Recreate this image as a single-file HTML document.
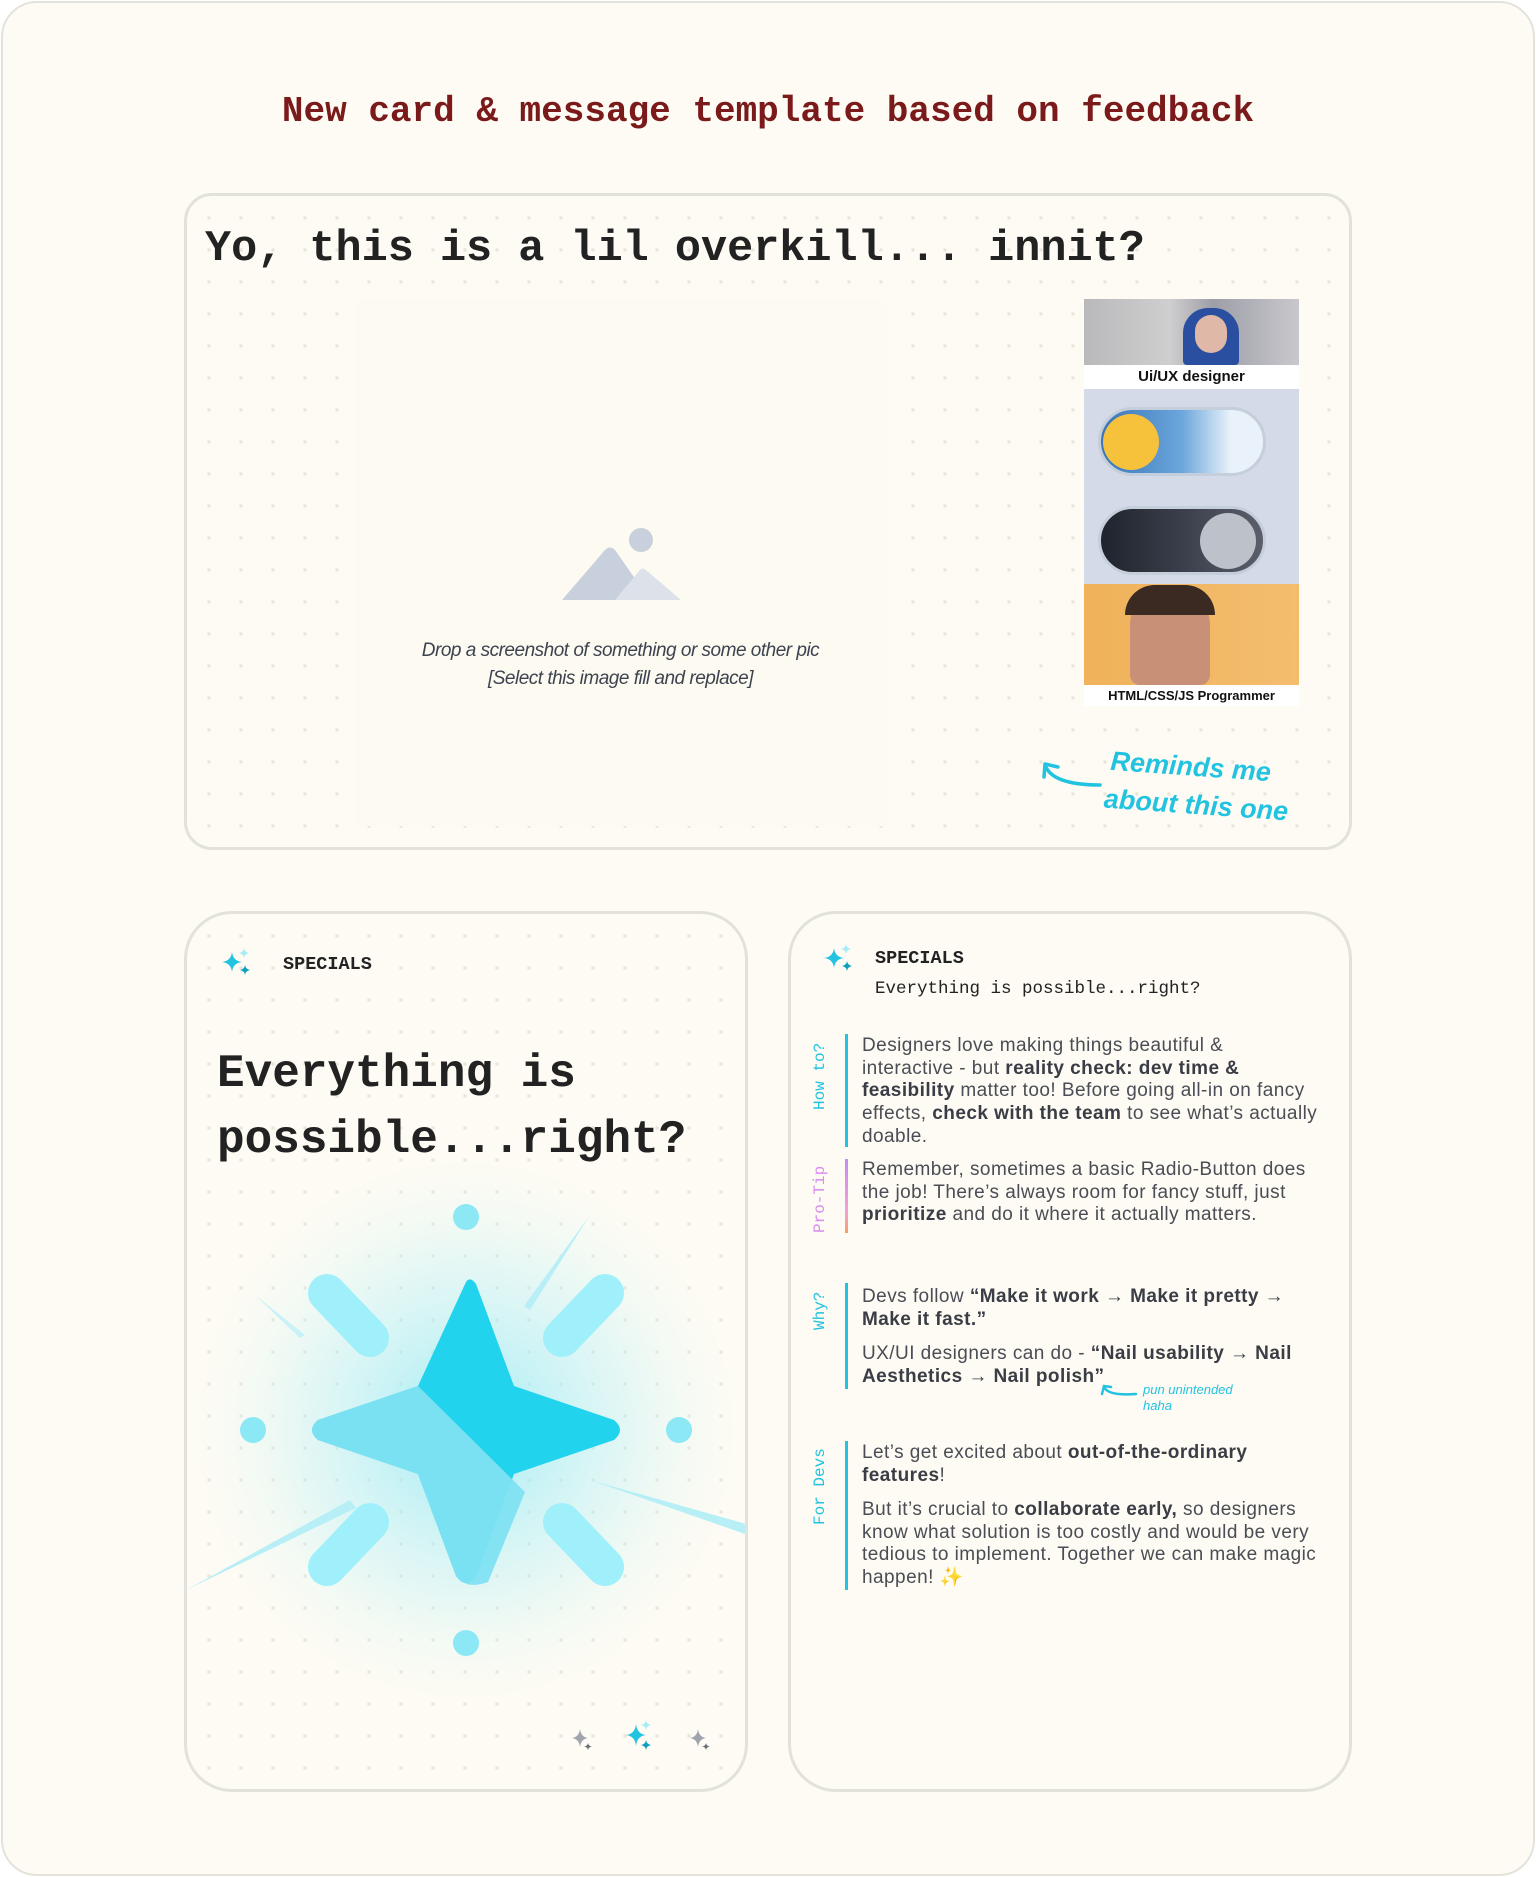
<!DOCTYPE html>
<html><head><meta charset="utf-8"><style>
*{box-sizing:border-box;margin:0;padding:0}
body{width:1536px;height:1877px;background:#fff;position:relative;overflow:hidden;font-family:"Liberation Sans",sans-serif}
.frame{position:absolute;left:1px;top:1px;width:1534px;height:1875px;border:2px solid #e3e3dc;border-radius:36px;background:#fdfbf3}
.dots{background-image:radial-gradient(circle,#e9e7dc 1.6px,transparent 2px);background-size:32px 32px;background-position:6px 6px}
.card{position:absolute;border:3px solid #e2e2da;background-color:#fdfbf3}
.mono{font-family:"Liberation Mono",monospace}
.abs{position:absolute}
.lbl{position:absolute;transform:rotate(-90deg);transform-origin:left top;font-family:"Liberation Mono",monospace;font-size:16px;white-space:nowrap}
.bar{position:absolute;left:845px;width:3px;background:#22c3e0}
.txt{position:absolute;left:862px;width:466px;font-size:19px;letter-spacing:0.45px;line-height:22.7px;color:#4a4d55}
.txt b{color:#3a3d45}
</style></head><body>
<div class="frame"></div>
<div class="abs mono" style="left:0;width:1536px;top:91px;text-align:center;font-size:36px;font-weight:bold;color:#7a1a1a">New card &amp; message template based on feedback</div>

<div class="card dots" style="left:184px;top:193px;width:1168px;height:657px;border-radius:28px"></div>
<div class="abs mono" style="left:205px;top:225px;font-size:43.5px;font-weight:bold;color:#222">Yo, this is a lil overkill... innit?</div>
<div class="abs" style="left:355px;top:299px;width:531px;height:527px;background:#fcfaf1"></div>
<svg class="abs" style="left:555px;top:520px" width="130" height="85" viewBox="0 0 130 85">
<circle cx="86" cy="20" r="12" fill="#c9d0dd"/>
<path d="M7 80 L50 30 Q55 25 60 30 L95 80Z" fill="#c9d0dd"/>
<path d="M60 80 L85 50 Q88 47 91 50 L126 80Z" fill="#dde2ea"/>
</svg>
<div class="abs" style="left:355px;width:531px;top:637px;text-align:center;font-size:19px;line-height:28px;color:#3d4450;font-style:italic;letter-spacing:-0.5px">Drop a screenshot of something or some other pic<br>[Select this image fill and replace]</div>

<div class="abs" style="left:1084px;top:299px;width:215px;height:66px;background:linear-gradient(90deg,#b9b9bb,#cfcfd0 40%,#9e9ea8 60%,#c8c8cc)"></div>
<div class="abs" style="left:1183px;top:308px;width:56px;height:57px;border-radius:25px 25px 4px 4px;background:#2a4fa0"></div>
<div class="abs" style="left:1195px;top:315px;width:32px;height:38px;border-radius:16px;background:#e0b8a8"></div>
<div class="abs" style="left:1084px;top:365px;width:215px;height:24px;background:#fff;font-size:15px;font-weight:bold;text-align:center;line-height:24px;color:#111">Ui/UX designer</div>
<div class="abs" style="left:1084px;top:389px;width:215px;height:195px;background:#d4dae7"></div>
<div class="abs" style="left:1098px;top:407px;width:168px;height:69px;border-radius:35px;background:linear-gradient(90deg,#3a76b8,#6ba6dc 50%,#e9f2fa 80%);border:3px solid #c5cedb"></div>
<div class="abs" style="left:1103px;top:414px;width:56px;height:56px;border-radius:50%;background:#f6c23c"></div>
<div class="abs" style="left:1098px;top:506px;width:168px;height:69px;border-radius:35px;background:linear-gradient(90deg,#1f232d,#3a3f4b 50%,#5a5f6b);border:3px solid #c5cedb"></div>
<div class="abs" style="left:1200px;top:513px;width:56px;height:56px;border-radius:50%;background:#bcc1ca"></div>
<div class="abs" style="left:1084px;top:584px;width:215px;height:101px;background:linear-gradient(90deg,#f0b25a,#f3bd6e)"></div>
<div class="abs" style="left:1130px;top:590px;width:80px;height:95px;border-radius:35px 35px 10px 10px;background:#c99078"></div>
<div class="abs" style="left:1125px;top:585px;width:90px;height:30px;border-radius:30px 30px 0 0;background:#3a2a22"></div>
<div class="abs" style="left:1084px;top:685px;width:215px;height:21px;background:#fff;font-size:13px;font-weight:bold;text-align:center;line-height:21px;color:#111">HTML/CSS/JS Programmer</div>
<svg class="abs" style="left:1040px;top:755px" width="70" height="40"><path d="M5 10 Q12 30 60 30" stroke="#22c3e0" stroke-width="3.5" fill="none" stroke-linecap="round"/><path d="M4 22 L5 9 L18 12" stroke="#22c3e0" stroke-width="3.5" fill="none" stroke-linecap="round" stroke-linejoin="round"/></svg>
<div class="abs" style="left:1112px;top:742px;font-size:27px;color:#22c3e0;transform:rotate(4deg);transform-origin:left top;line-height:38px;font-style:italic;font-weight:bold">Reminds me<br><span style="margin-left:-4px">about this one</span></div>

<div class="card dots" style="left:184px;top:911px;width:564px;height:881px;border-radius:48px"></div>
<div class="card" style="left:788px;top:911px;width:564px;height:881px;border-radius:48px"></div>

<svg class="abs" style="left:220px;top:946px" width="34" height="34" viewBox="0 0 34 34">
<path d="M12 6 Q13 15 22 16 Q13 17 12 26 Q11 17 2 16 Q11 15 12 6Z" fill="#22c3e0"/>
<path d="M24 2 Q24.5 6 29 7 Q24.5 8 24 12 Q23.5 8 19 7 Q23.5 6 24 2Z" fill="#a8ecf6"/>
<path d="M25 19 Q25.5 23 30 24 Q25.5 25 25 29 Q24.5 25 20 24 Q24.5 23 25 19Z" fill="#0e9fbe"/>
</svg>
<div class="abs mono" style="left:283px;top:954px;font-size:18.5px;font-weight:bold;color:#222">SPECIALS</div>
<div class="abs mono" style="left:217px;top:1041px;font-size:46px;line-height:66px;font-weight:bold;color:#222">Everything is<br>possible...right?</div>

<svg class="abs" style="left:0;top:0" width="1536" height="1877">
<defs><radialGradient id="g" cx="0.5" cy="0.5" r="0.5"><stop offset="0" stop-color="#7fe6f5" stop-opacity="0.75"/><stop offset="0.6" stop-color="#b4f0f8" stop-opacity="0.35"/><stop offset="1" stop-color="#dff8fb" stop-opacity="0"/></radialGradient>
<clipPath id="c"><rect x="187" y="914" width="558" height="875" rx="46"/></clipPath></defs>
<g clip-path="url(#c)">
<circle cx="466" cy="1430" r="270" fill="url(#g)"/>
<path d="M186 1590 L350 1500 L356 1508Z" fill="#b8eff7"/>
<path d="M590 1480 L750 1525 L748 1535Z" fill="#b8eff7"/>
<path d="M590 1215 L530 1310 L524 1306Z" fill="#b8eff7"/>
<path d="M255 1295 L305 1335 L300 1338Z" fill="#c8f2f8"/>
<g stroke="#9ff0fa" stroke-width="38" stroke-linecap="round">
<line x1="327" y1="1293" x2="370" y2="1338"/><line x1="605" y1="1293" x2="562" y2="1338"/>
<line x1="327" y1="1567" x2="370" y2="1522"/><line x1="605" y1="1567" x2="562" y2="1522"/>
</g>
<circle cx="466" cy="1217" r="13" fill="#8ce8f5"/><circle cx="466" cy="1643" r="13" fill="#8ce8f5"/>
<circle cx="253" cy="1430" r="13" fill="#8ce8f5"/><circle cx="679" cy="1430" r="13" fill="#8ce8f5"/>
<path d="M466 1282 Q470 1276 476 1284 L514 1386 L614 1420 Q626 1430 614 1440 L514 1474 L476 1576 Q466 1590 456 1576 L418 1474 L318 1440 Q306 1430 318 1420 L418 1386 Z" fill="#22d3ee"/>
<path d="M318 1420 L418 1386 L525 1492 L488 1582 Q466 1590 456 1576 L418 1474 L318 1440 Q306 1430 318 1420Z" fill="#7fe2f2" opacity="0.95"/>
</g>
<g transform="translate(570,1726)"><path d="M10 3 Q11 11 18 12 Q11 13 10 21 Q9 13 2 12 Q9 11 10 3Z" fill="#a0a4ad"/><path d="M18 17 Q18.5 20 22 20.5 Q18.5 21 18 24 Q17.5 21 14 20.5 Q17.5 20 18 17Z" fill="#6b6f78"/></g>
<g transform="translate(624,1720)"><path d="M12 4 Q13 14 22 15 Q13 16 12 26 Q11 16 2 15 Q11 14 12 4Z" fill="#22c3e0"/><path d="M22 0 Q22.5 4 27 5 Q22.5 6 22 10 Q21.5 6 17 5 Q21.5 4 22 0Z" fill="#a8ecf6"/><path d="M22 20 Q22.5 24 27 25 Q22.5 26 22 30 Q21.5 26 17 25 Q21.5 24 22 20Z" fill="#0e9fbe"/></g>
<g transform="translate(688,1726)"><path d="M10 3 Q11 11 18 12 Q11 13 10 21 Q9 13 2 12 Q9 11 10 3Z" fill="#a0a4ad"/><path d="M18 17 Q18.5 20 22 20.5 Q18.5 21 18 24 Q17.5 21 14 20.5 Q17.5 20 18 17Z" fill="#6b6f78"/></g>
</svg>

<svg class="abs" style="left:822px;top:942px" width="34" height="34" viewBox="0 0 34 34">
<path d="M12 6 Q13 15 22 16 Q13 17 12 26 Q11 17 2 16 Q11 15 12 6Z" fill="#22c3e0"/>
<path d="M24 2 Q24.5 6 29 7 Q24.5 8 24 12 Q23.5 8 19 7 Q23.5 6 24 2Z" fill="#a8ecf6"/>
<path d="M25 19 Q25.5 23 30 24 Q25.5 25 25 29 Q24.5 25 20 24 Q24.5 23 25 19Z" fill="#0e9fbe"/>
</svg>
<div class="abs mono" style="left:875px;top:948px;font-size:18.5px;font-weight:bold;color:#222">SPECIALS</div>
<div class="abs mono" style="left:875px;top:979px;font-size:17.5px;color:#222">Everything is possible...right?</div>

<div class="lbl" style="left:811px;top:1110px;color:#22c3e0">How to?</div>
<div class="bar" style="top:1034px;height:113px"></div>
<div class="txt" style="top:1035px">Designers love making things beautiful &amp;<br>interactive - but <b>reality check: dev time &amp; feasibility</b> matter too! Before going all-in on fancy effects, <b>check with the team</b> to see what’s actually doable.</div>

<div class="lbl" style="left:811px;top:1233px;color:#d88cf0">Pro-Tip</div>
<div class="bar" style="top:1159px;height:74px;background:linear-gradient(#c98af5,#f3a0d8 70%,#f5a060)"></div>
<div class="txt" style="top:1159px">Remember, sometimes a basic Radio-Button does the job! There’s always room for fancy stuff, just <b>prioritize</b> and do it where it actually matters.</div>

<div class="lbl" style="left:811px;top:1330px;color:#22c3e0">Why?</div>
<div class="bar" style="top:1283px;height:106px"></div>
<div class="txt" style="top:1286px">Devs follow <b>“Make it work → Make it pretty → Make it fast.”</b></div>
<div class="txt" style="top:1343px">UX/UI designers can do - <b>“Nail usability → Nail Aesthetics → Nail polish”</b></div>
<svg class="abs" style="left:1100px;top:1382px" width="40" height="20"><path d="M4 5 Q8 14 36 12" stroke="#22c3e0" stroke-width="2.5" fill="none" stroke-linecap="round"/><path d="M2 12 L4 4 L11 5" stroke="#22c3e0" stroke-width="2.5" fill="none" stroke-linecap="round"/></svg>
<div class="abs" style="left:1143px;top:1382px;font-size:13px;line-height:16px;color:#22c3e0;font-style:italic">pun unintended<br>haha</div>

<div class="lbl" style="left:811px;top:1525px;color:#22c3e0">For Devs</div>
<div class="bar" style="top:1441px;height:149px"></div>
<div class="txt" style="top:1442px">Let’s get excited about <b>out-of-the-ordinary features</b>!</div>
<div class="txt" style="top:1499px">But it’s crucial to <b>collaborate early,</b> so designers know what solution is too costly and would be very tedious to implement. Together we can make magic happen! <span style="color:#f5d76e">✨</span></div>
</body></html>
